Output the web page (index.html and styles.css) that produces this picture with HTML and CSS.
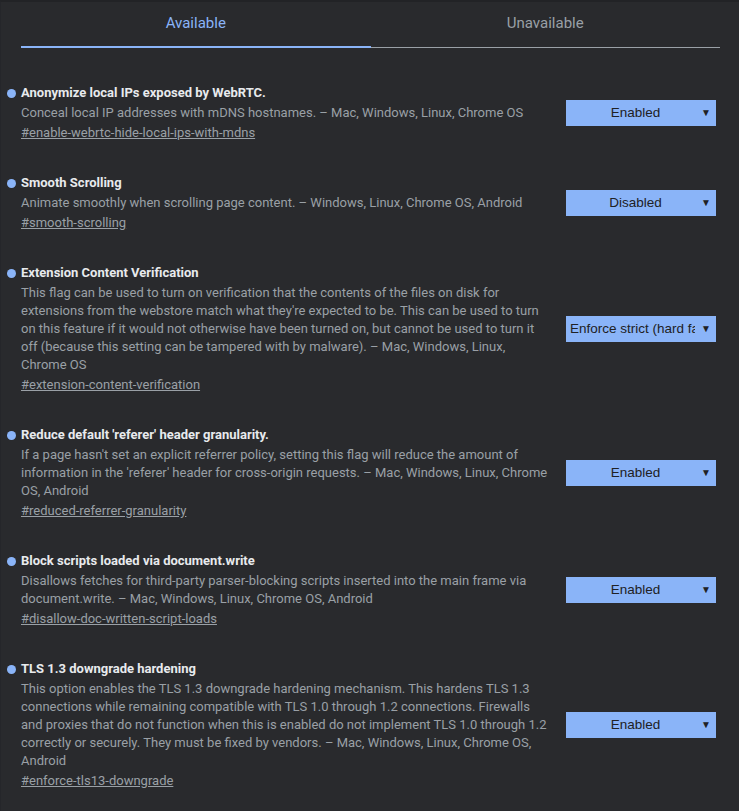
FILE: index.html
```html
<!DOCTYPE html>
<html>
<head>
<meta charset="utf-8">
<link rel="stylesheet" href="styles.css">
</head>
<body>
<div class="page">
  <div class="tabs">
    <div class="tab active">Available</div>
    <div class="tab">Unavailable</div>
  </div>
  <div class="list">
    <div class="experiment">
      <div class="info">
        <h2 class="title"><span class="dot"></span>Anonymize local IPs exposed by WebRTC.</h2>
        <p class="desc">Conceal local IP addresses with mDNS hostnames. – Mac, Windows, Linux, Chrome OS</p>
        <a class="link">#enable-webrtc-hide-local-ips-with-mdns</a>
      </div>
      <div class="select"><span class="val">Enabled</span><span class="arrow">▼</span></div>
    </div>
    <div class="experiment">
      <div class="info">
        <h2 class="title"><span class="dot"></span>Smooth Scrolling</h2>
        <p class="desc">Animate smoothly when scrolling page content. – Windows, Linux, Chrome OS, Android</p>
        <a class="link">#smooth-scrolling</a>
      </div>
      <div class="select"><span class="val">Disabled</span><span class="arrow">▼</span></div>
    </div>
    <div class="experiment">
      <div class="info">
        <h2 class="title"><span class="dot"></span>Extension Content Verification</h2>
        <p class="desc">This flag can be used to turn on verification that the contents of the files on disk for extensions from the webstore match what they're expected to be. This can be used to turn on this feature if it would not otherwise have been turned on, but cannot be used to turn it off (because this setting can be tampered with by malware). – Mac, Windows, Linux, Chrome OS</p>
        <a class="link">#extension-content-verification</a>
      </div>
      <div class="select"><span class="val left">Enforce strict (hard fail)</span><span class="arrow">▼</span></div>
    </div>
    <div class="experiment">
      <div class="info">
        <h2 class="title"><span class="dot"></span>Reduce default 'referer' header granularity.</h2>
        <p class="desc">If a page hasn't set an explicit referrer policy, setting this flag will reduce the amount of information in the 'referer' header for cross-origin requests. – Mac, Windows, Linux, Chrome OS, Android</p>
        <a class="link">#reduced-referrer-granularity</a>
      </div>
      <div class="select"><span class="val">Enabled</span><span class="arrow">▼</span></div>
    </div>
    <div class="experiment">
      <div class="info">
        <h2 class="title"><span class="dot"></span>Block scripts loaded via document.write</h2>
        <p class="desc">Disallows fetches for third-party parser-blocking scripts inserted into the main frame via document.write. – Mac, Windows, Linux, Chrome OS, Android</p>
        <a class="link">#disallow-doc-written-script-loads</a>
      </div>
      <div class="select"><span class="val">Enabled</span><span class="arrow">▼</span></div>
    </div>
    <div class="experiment">
      <div class="info">
        <h2 class="title"><span class="dot"></span>TLS 1.3 downgrade hardening</h2>
        <p class="desc">This option enables the TLS 1.3 downgrade hardening mechanism. This hardens TLS 1.3 connections while remaining compatible with TLS 1.0 through 1.2 connections. Firewalls and proxies that do not function when this is enabled do not implement TLS 1.0 through 1.2 correctly or securely. They must be fixed by vendors. – Mac, Windows, Linux, Chrome OS, Android</p>
        <a class="link">#enforce-tls13-downgrade</a>
      </div>
      <div class="select"><span class="val">Enabled</span><span class="arrow">▼</span></div>
    </div>
  </div>
</div>
</body>
</html>
```

FILE: styles.css
```css
html, body {
  margin: 0;
  padding: 0;
  background: #292a2d;
}
body {
  font-family: Roboto, "Liberation Sans", sans-serif;
  font-size: 13px;
  color: #9aa0a6;
}
.page {
  min-height: 811px;
  box-sizing: border-box;
  border-top: 2px solid #222326;
  border-left: 1px solid #25262a;
  padding: 0 23px 0 20px;
}
.tabs {
  display: flex;
  margin-right: -4px;
}
.tab {
  flex: 1;
  text-align: center;
  font-size: 15px;
  line-height: 20px;
  padding: 11px 0 14px;
  color: #9aa0a6;
  border-bottom: 1px solid #9aa0a6;
}
.tab.active {
  color: #8ab4f8;
  padding-bottom: 13px;
  border-bottom: 2px solid #8ab4f8;
}
.list {
  padding-top: 4px;
}
.experiment {
  display: flex;
  align-items: center;
  gap: 16px;
  margin-top: 31px;
}
.info {
  flex: 1;
  min-width: 0;
}
.title {
  margin: 0;
  display: flex;
  align-items: center;
  font-size: 13px;
  line-height: 20px;
  font-weight: bold;
  color: #e8eaed;
}
.dot {
  width: 9px;
  height: 9px;
  border-radius: 50%;
  background: #8ab4f8;
  margin-left: -14px;
  margin-right: 5px;
  flex: none;
}
.desc {
  margin: 1px 0 0;
  line-height: 18px;
}
.link {
  display: block;
  margin-top: 2px;
  line-height: 18px;
  color: #9aa0a6;
  text-decoration: underline;
}
.select {
  flex: none;
  width: 150px;
  height: 26px;
  box-sizing: border-box;
  background: #8ab4f8;
  color: #202124;
  display: flex;
  align-items: center;
  padding: 0 5px 0 4px;
  font-family: "Liberation Sans", Arial, sans-serif;
  font-size: 13.5px;
}
.val {
  flex: 1;
  text-align: center;
  white-space: nowrap;
  overflow: hidden;
  text-overflow: clip;
}
.val.left {
  text-align: left;
  margin-right: 6px;
}
.arrow {
  flex: none;
  font-size: 10px;
  color: #202124;
}
```
